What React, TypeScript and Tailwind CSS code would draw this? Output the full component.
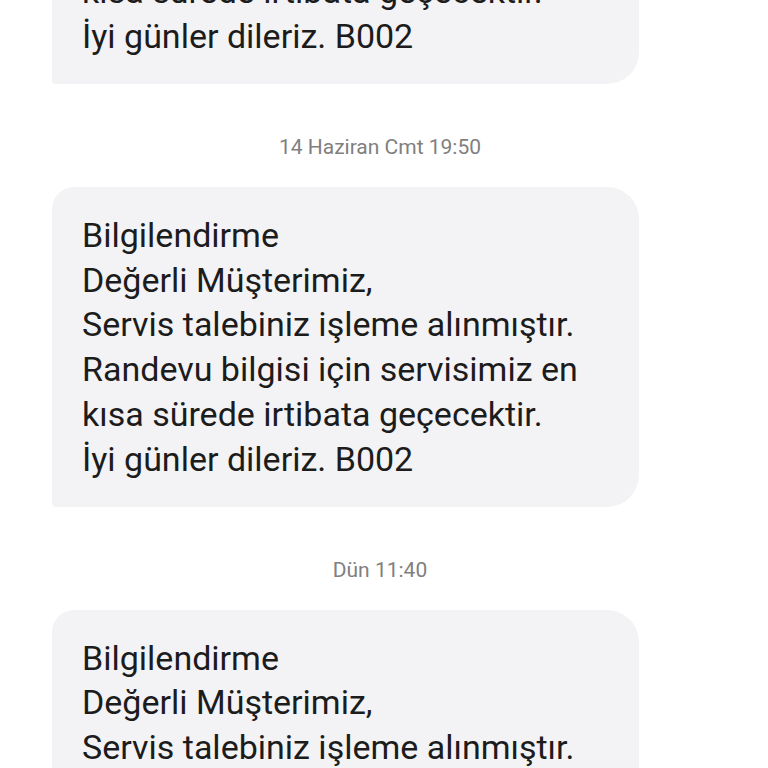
const MESSAGE = [
  "Bilgilendirme",
  "Değerli Müşterimiz,",
  "Servis talebiniz işleme alınmıştır.",
  "Randevu bilgisi için servisimiz en",
  "kısa sürede irtibata geçecektir.",
  "İyi günler dileriz. B002",
];

function Bubble({ className = "" }: { className?: string }) {
  return (
    <div
      className={`ml-[52px] w-[587px] bg-[#f3f3f5] rounded-tl-[22px] rounded-tr-[32px] rounded-br-[32px] rounded-bl-[4px] pl-[30px] pr-4 pt-[26px] pb-[25px] text-[34px] leading-[44.8px] text-[#1c1c1c] ${className}`}
    >
      {MESSAGE.map((line, i) => (
        <div key={i} className="whitespace-nowrap">{line}</div>
      ))}
    </div>
  );
}

function Stamp({ text }: { text: string }) {
  return (
    <div className="w-[760px] text-center text-[21px] leading-[24px] text-[#808080] mt-[51px] mb-[28px]">
      {text}
    </div>
  );
}

export default function App() {
  return (
    <div
      className="w-[768px] h-[768px] overflow-hidden bg-white"
      style={{ fontFamily: "Roboto, 'Noto Sans', sans-serif" }}
    >
      <Bubble className="mt-[-236px]" />
      <Stamp text="14 Haziran Cmt 19:50" />
      <Bubble />
      <Stamp text="Dün 11:40" />
      <Bubble />
    </div>
  );
}
